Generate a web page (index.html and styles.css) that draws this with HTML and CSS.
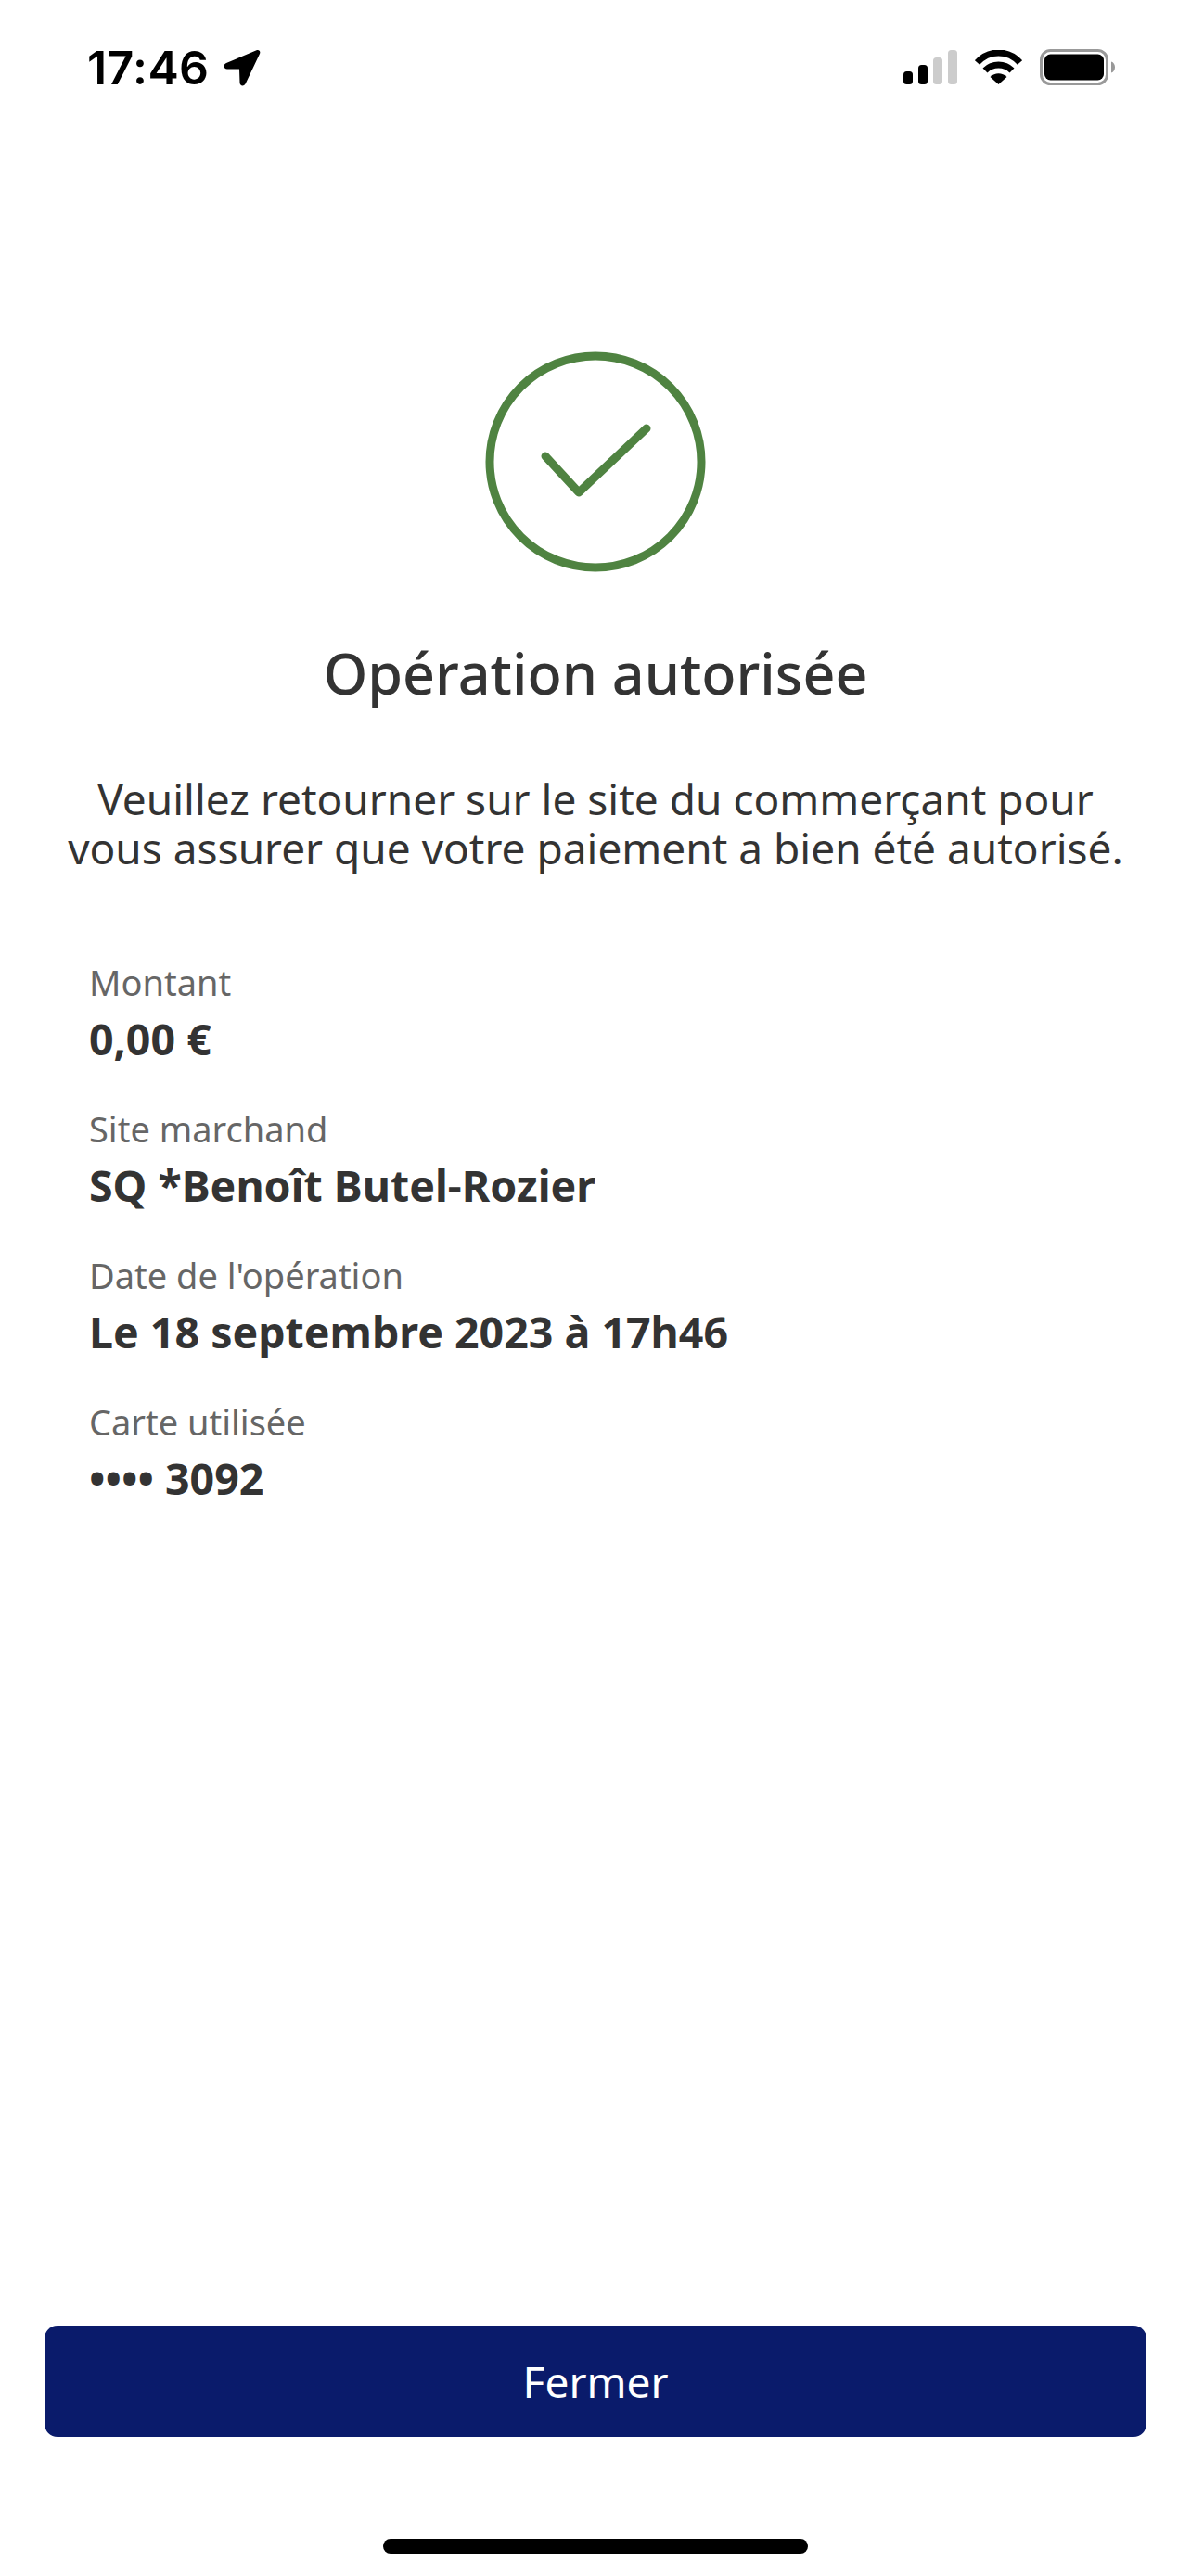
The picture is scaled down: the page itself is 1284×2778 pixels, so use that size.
FILE: index.html
```html
<!DOCTYPE html>
<html lang="fr">
<head>
    <meta charset="UTF-8">
    <meta name="viewport" content="width=device-width, initial-scale=1.0">
    <title>Opération autorisée</title>
    <link rel="stylesheet" href="styles.css">
</head>
<body>
    <div class="page">
        <header class="status_bar">
            <div class="status_left">
                <span class="clock">17:46</span>
                <svg class="arrow" width="40" height="40" viewBox="0 0 40 40">
                    <path d="M35.500 1.300 3 15c-4 1.700-3 6.500 1 6.500L17 21.500 17.500 36c0 4 4.800 4.600 6.300 1L39 5c1.200-2.700-1-4.800-3.500-3.700z" fill="#000"/>
                </svg>
            </div>
            <div class="status_right">
                <svg width="58" height="37" viewBox="0 0 58 37">
                    <rect x="0" y="23" width="10" height="14" rx="3.500" fill="#000"/>
                    <rect x="16" y="16" width="10" height="21" rx="3.500" fill="#000"/>
                    <rect x="32" y="8" width="10" height="29" rx="3.500" fill="#ccc"/>
                    <rect x="48" y="0" width="10" height="37" rx="3.500" fill="#ccc"/>
                </svg>
                <svg width="51" height="37" viewBox="0 0 51 37">
                    <path d="M2.500 13.500C15-.5 36-.5 48.500 13.500" fill="none" stroke="#000" stroke-width="7"/>
                    <path d="M11 22c8-8 21-8 29 0" fill="none" stroke="#000" stroke-width="7"/>
                    <path d="M16.500 29c5-5 13-5 18 0l-9 8z" fill="#000"/>
                </svg>
                <svg width="81" height="39" viewBox="0 0 81 39">
                    <rect x="1.500" y="1.500" width="71" height="36" rx="10" fill="none" stroke="#999" stroke-width="3"/>
                    <rect x="5" y="5.500" width="64" height="28" rx="6.500" fill="#000"/>
                    <path d="M77 13.500c2.500.8 4 3 4 6s-1.500 5.200-4 6z" fill="#999"/>
                </svg>
            </div>
        </header>

        <main class="content">
            <svg class="check" width="240" height="240" viewBox="0 0 240 240">
                <circle cx="120" cy="120" r="114" fill="none" stroke="#4f8341" stroke-width="9"/>
                <path d="M66 114 102 153 175 84" fill="none" stroke="#4f8341" stroke-width="9" stroke-linecap="round" stroke-linejoin="round"/>
            </svg>
            <h1 class="title">Opération autorisée</h1>
            <p class="message">Veuillez retourner sur le site du commerçant pour<br>vous assurer que votre paiement a bien été autorisé.</p>

            <dl class="details">
                <div class="detail">
                    <dt>Montant</dt>
                    <dd>0,00 €</dd>
                </div>
                <div class="detail">
                    <dt>Site marchand</dt>
                    <dd>SQ *Benoît Butel-Rozier</dd>
                </div>
                <div class="detail">
                    <dt>Date de l'opération</dt>
                    <dd>Le 18 septembre 2023 à 17h46</dd>
                </div>
                <div class="detail">
                    <dt>Carte utilisée</dt>
                    <dd>•••• 3092</dd>
                </div>
            </dl>
        </main>

        <footer class="bottom">
            <button class="btn_close">Fermer</button>
            <div class="home_bar"></div>
        </footer>
    </div>
</body>
</html>
```

FILE: styles.css
```css
* {
    box-sizing: border-box;
}
html, body {
    margin: 0;
    padding: 0;
    background: #fff;
}
.page {
    width: 1284px;
    height: 2778px;
    display: flex;
    flex-direction: column;
    font-family: "Noto Sans", sans-serif;
    color: #333;
}
.status_bar {
    height: 378px;
    flex: none;
    display: flex;
    justify-content: space-between;
    align-items: flex-start;
    padding: 48px 82px 0 94px;
}
.status_left {
    display: flex;
    align-items: center;
    gap: 15px;
}
.clock {
    font-family: Inter, sans-serif;
    font-size: 50px;
    line-height: 50px;
    font-weight: 600;
    letter-spacing: 0.4px;
    color: #000;
}
.status_right {
    display: flex;
    align-items: center;
    gap: 19px;
    padding-top: 5px;
}
.content {
    flex: 1;
    display: flex;
    flex-direction: column;
    align-items: center;
}
.check {
    display: block;
}
.title {
    margin: 68px 0 0;
    font-size: 61px;
    line-height: 80px;
    font-weight: 500;
    text-align: center;
}
.message {
    margin: 69px 0 0;
    font-size: 46px;
    line-height: 53px;
    font-weight: 400;
    text-align: center;
}
.details {
    align-self: stretch;
    margin: 93px 0 0;
    padding: 0 96px;
    display: flex;
    flex-direction: column;
    gap: 42px;
}
.detail dt {
    font-size: 38px;
    line-height: 50px;
    color: #666;
}
.detail dd {
    margin: 6px 0 0;
    font-size: 46.5px;
    line-height: 60px;
    font-weight: 700;
}
.bottom {
    flex: none;
    display: flex;
    flex-direction: column;
    align-items: center;
    padding: 0 48px 24px;
}
.btn_close {
    width: 100%;
    height: 120px;
    border: none;
    border-radius: 14px;
    background: #0a1b6b;
    color: #fff;
    font-family: "Noto Sans", sans-serif;
    font-size: 46px;
}
.home_bar {
    width: 458px;
    height: 16px;
    margin-top: 110px;
    border-radius: 8px;
    background: #000;
}
```
